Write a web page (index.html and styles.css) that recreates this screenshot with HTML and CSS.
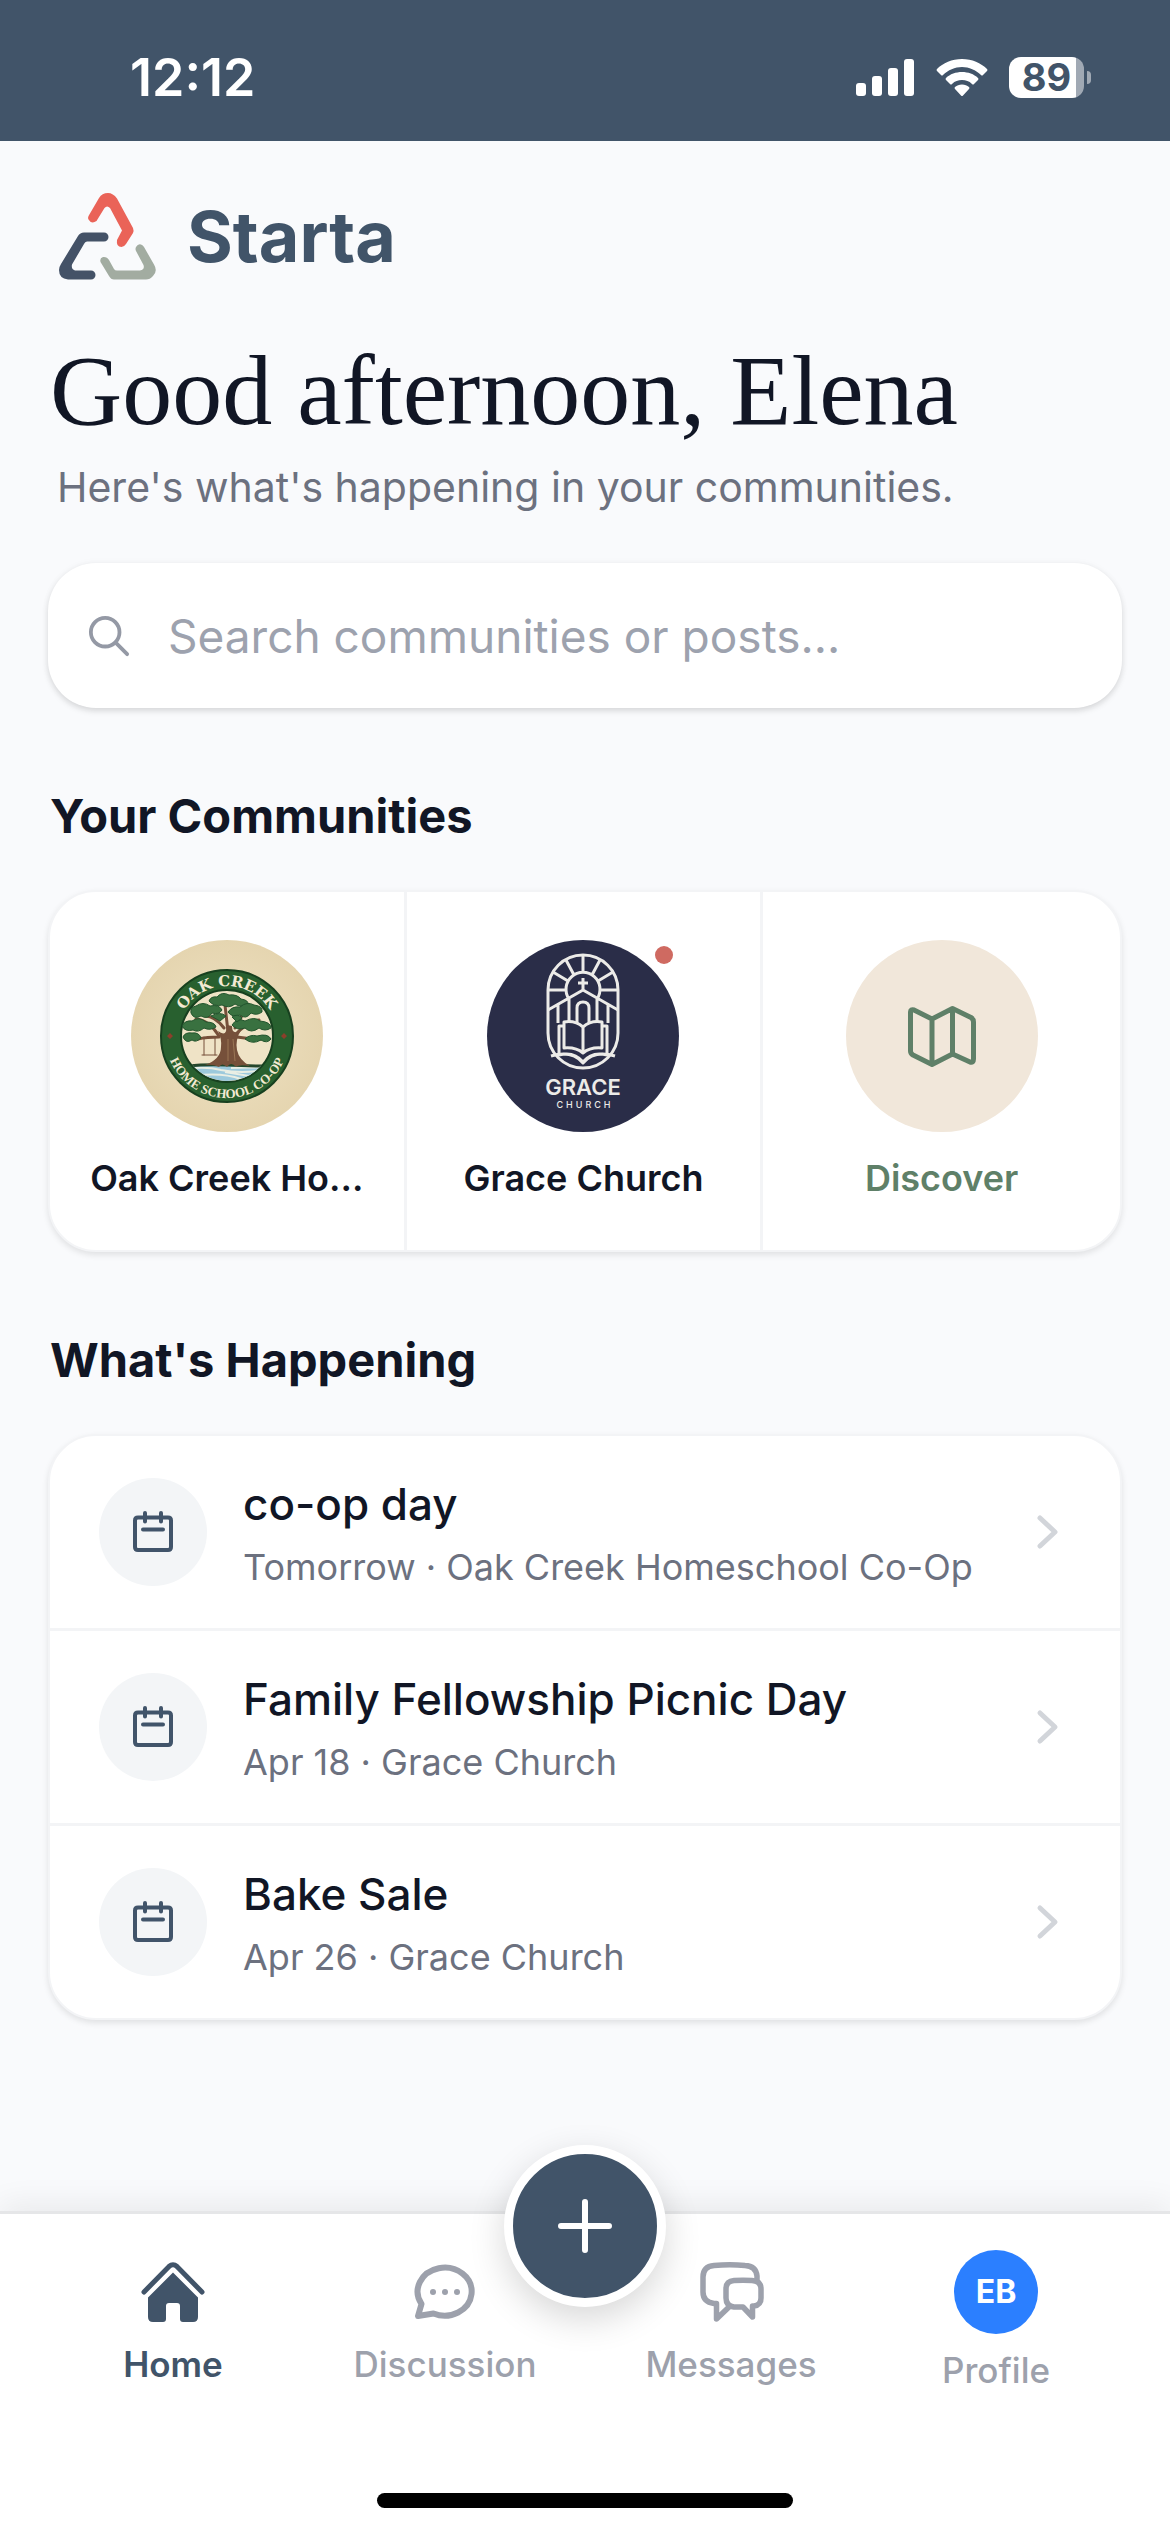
FILE: index.html
```html
<!DOCTYPE html>
<html lang="en">
<head>
<meta charset="utf-8">
<meta name="viewport" content="width=device-width, initial-scale=1">
<title>Starta</title>
<link rel="stylesheet" href="styles.css">
</head>
<body>
<div class="status-bar">
  <span class="clock">12:12</span>
  <div class="status-icons">
    <svg width="60" height="38" viewBox="0 0 60 38" fill="#fff" aria-hidden="true">
      <rect x="1" y="24" width="10" height="13" rx="3"/><rect x="17" y="17" width="10" height="20" rx="3"/><rect x="33" y="9" width="10" height="28" rx="3"/><rect x="49" y="0" width="10" height="37" rx="3"/>
    </svg>
    <svg width="52" height="38" viewBox="0 0 52 38" fill="#fff" aria-hidden="true">
      <path d="M26 0C36 0 45 4 51 10Q52 11 51 12L47 16Q46 17 45 16C40 11 33 8 26 8S12 11 7 16Q6 17 5 16L1 12Q0 11 1 10C7 4 16 0 26 0Z"/>
      <path d="M26 13C32 13 38 15 42 19Q43 20 42 21L38 25Q37 26 36 25C33 22 30 21 26 21S19 22 16 25Q15 26 14 25L10 21Q9 20 10 19C14 15 20 13 26 13Z"/>
      <path d="M26 25.500C29 25.500 31 26.500 33 28Q34 29 33 30L27 36.500Q26 37.500 25 36.500L19 30Q18 29 19 28C21 26.500 23 25.500 26 25.500Z"/>
    </svg>
    <div class="battery"><span class="battery-level">89</span></div>
  </div>
</div>

<main class="page">
  <header class="brand">
    <svg width="98" height="88" viewBox="0 0 98 88" aria-hidden="true">
      <path d="M29.500 26.500Q32.500 31.500 37.500 28L45.500 15Q48 12 51 15L63 37.500L58 47Q57 54 62.500 54Q65 54 67 51L74 40Q75 37.500 74 35L58 5.500Q54 0 49 0Q43 0 40 5L29.500 23Q28.500 25 29.500 26.500Z" fill="#ea6358"/>
      <path d="M25 39.500H45A4.500 4.500 0 0 1 45 48.500H28Q26 48.500 25 51L13 71.500Q12 76 16 77.500H32A4.500 4.500 0 0 1 32 86.500H9Q0 85.500 0 77Q0 74 2 71L19 43Q21 39.500 25 39.500Z" fill="#445267"/>
      <path d="M77 54Q79 50.500 82 51.500Q84 52 85 54L95 71.500Q99 78 94 83Q91 86.500 87 86.500H55Q52 86.500 50 83L41.500 69Q40.500 65 44 64Q48 63.500 50 67L55 76Q56 77.500 58 77.500H81Q86 76.500 84.500 72L77 58Q76 56 77 54Z" fill="#a2aca1"/>
    </svg>
    <span class="brand-name">Starta</span>
  </header>

  <h1 class="greeting">Good afternoon, Elena</h1>
  <p class="subtitle">Here's what's happening in your communities.</p>

  <form class="search" role="search">
    <svg width="42" height="42" viewBox="0 0 44 44" fill="none" stroke="#9499a5" stroke-width="4" stroke-linecap="round" aria-hidden="true"><circle cx="18" cy="18" r="15"/><path d="M29 29L41 41"/></svg>
    <input class="search-input" type="search" aria-label="Search communities or posts" placeholder="Search communities or posts...">
  </form>

  <section>
    <h2 class="section-title">Your Communities</h2>
    <div class="card communities">
      <a class="community" href="#oak-creek">
        <svg class="avatar" viewBox="0 0 192 192" aria-hidden="true">
          <defs>
            <radialGradient id="sand"><stop offset="0" stop-color="#efe2c3"/><stop offset="1" stop-color="#e5d5b0"/></radialGradient>
            <clipPath id="inner"><circle cx="96" cy="96" r="45"/></clipPath>
            <path id="arc-top" d="M46 96A50 50 0 0 1 146 96"/>
            <path id="arc-bottom" d="M34 96A62 62 0 0 0 158 96"/>
          </defs>
          <circle cx="96" cy="96" r="96" fill="url(#sand)"/>
          <circle cx="96" cy="96" r="66" fill="#28602f" stroke="#17401f" stroke-width="2"/>
          <circle cx="96" cy="96" r="46" fill="#efe3c6" stroke="#17401f" stroke-width="2"/>
          <g clip-path="url(#inner)">
            <path d="M48 126H144V145H48Z" fill="#9cc9dc"/>
            <path d="M53 129Q75 126 90 130Q110 134 135 130M62 136Q90 132 110 139M100 128L138 127L118 136L94 132" stroke="#e9eee4" stroke-width="2" fill="none"/>
            <path d="M57 126Q75 124 96 125T137 126" stroke="#24462b" stroke-width="3" fill="none"/>
          </g>
          <g fill="none" stroke="#76503a" stroke-linecap="round">
            <path d="M88 96Q78 80 65 79M104 95Q116 82 128 80M97 92L94 65M93 88Q84 76 74 76M104 88Q114 74 111 67M88 97Q76 97 67 99M106 97Q118 99 130 99" stroke-width="3"/>
            <path d="M73 97V115M84 97V115M71 115H86" stroke-width="1"/>
          </g>
          <path d="M87 91Q96 98 96 85L101 86Q101 96 110 90Q104 100 106 110Q108 120 119 126Q108 124 105 127Q100 121 96 127Q91 122 88 127Q82 124 74 125Q90 119 90 107Q91 99 87 91Z" fill="#76503a"/>
          <path d="M97 99V121M102 99L104 121" stroke="#9a7655" stroke-width="1"/>
          <g fill="#397140" stroke="#23552e" stroke-width="1">
            <path d="M78 61Q80 56 86 57Q91 51 98 55Q106 54 110 59Q118 60 117 65Q110 68 104 64Q98 69 91 65Q83 67 78 61Z"/>
            <path d="M60 73Q59 67 65 66Q72 61 79 66Q88 64 91 70Q88 75 81 73Q77 80 70 76Q63 80 60 73Z"/>
            <path d="M97 72Q101 66 109 67Q116 61 123 65Q132 66 131 72Q126 76 120 73Q115 80 109 75Q101 78 97 72Z"/>
            <path d="M51 86Q54 80 61 81Q68 76 75 82Q84 82 85 87Q79 91 73 88Q67 93 62 90Q54 92 51 86Z"/>
            <path d="M101 85Q106 77 114 81Q124 76 129 81Q140 82 140 88Q134 92 128 88Q120 94 114 88Q106 91 101 85Z"/>
            <path d="M52 97Q54 92 61 93Q68 92 70 98Q65 103 61 100Q55 104 52 97ZM114 99Q119 94 126 96Q137 93 140 99Q136 104 130 100Q121 105 114 99ZM80 76Q89 71 95 76L89 81ZM101 77Q107 73 111 78L106 82Z"/>
          </g>
          <path d="M39 93L42 96L39 99L36 96ZM153 93L156 96L153 99L150 96Z" fill="#8b3f2b"/>
          <text class="badge-text badge-top" text-anchor="middle"><textPath href="#arc-top" startOffset="50%">OAK CREEK</textPath></text>
          <text class="badge-text badge-bottom" text-anchor="middle"><textPath href="#arc-bottom" startOffset="50%">HOME SCHOOL CO-OP</textPath></text>
        </svg>
        <span class="community-name">Oak Creek Ho...</span>
      </a>
      <a class="community" href="#grace-church">
        <span class="avatar-wrap">
          <svg class="avatar" viewBox="0 0 192 192" aria-hidden="true">
            <circle cx="96" cy="96" r="96" fill="#2a2d48"/>
            <g fill="none" stroke="#ecebe8" stroke-width="3" stroke-linejoin="round">
              <path d="M61 50A35 35 0 0 1 131 50V93A35 35 0 0 1 61 93Z"/>
              <path d="M82 59A17 17 0 1 1 110 59M96 15V32M79 20L87 35M66 32L81 41M61 50H78M113 20L105 35M126 32L111 41M131 50H114"/>
              <path d="M61 70L96 50L131 70M96 38V51M91 43H101M82 58V81M110 58V81M90 84V68Q90 62 96 62T102 68V84M71 64V83M121 64V83"/>
              <path d="M96 87Q88 80 77 82V108Q89 107 96 113Q103 107 115 108V82Q104 80 96 87V113M77 86H72V115Q87 111 96 122Q105 111 120 115V86H115M64 116Q85 110 96 123Q107 110 128 116"/>
            </g>
            <text class="grace-title" x="96" y="155" text-anchor="middle">GRACE</text>
            <text class="grace-sub" x="98" y="168" text-anchor="middle">CHURCH</text>
          </svg>
          <span class="unread-dot"></span>
        </span>
        <span class="community-name">Grace Church</span>
      </a>
      <a class="community discover" href="#discover">
        <svg class="avatar" viewBox="0 0 192 192" aria-hidden="true">
          <circle cx="96" cy="96" r="96" fill="#f1e7da"/>
          <path d="M64.500 72Q64.500 69 68 70L86 79L106.500 68.500L125 77.500Q127.500 79 127.500 82V119Q127.500 123 124 122L106.500 114L86 124.500L67 115Q64.500 113.500 64.500 111ZM86 79V124M106.500 69V114" fill="none" stroke="#5f8068" stroke-width="5" stroke-linejoin="round"/>
        </svg>
        <span class="community-name">Discover</span>
      </a>
    </div>
  </section>

  <section>
    <h2 class="section-title">What's Happening</h2>
    <div class="card events">
      <a class="event" href="#coop-day">
        <span class="event-icon"><svg width="42" height="42" aria-hidden="true"><use href="#calendar"/></svg></span>
        <span class="event-text"><span class="event-title">co-op day</span><span class="event-meta">Tomorrow · Oak Creek Homeschool Co-Op</span></span>
        <svg width="24" height="36" aria-hidden="true"><use href="#chevron"/></svg>
      </a>
      <a class="event" href="#picnic">
        <span class="event-icon"><svg width="42" height="42" aria-hidden="true"><use href="#calendar"/></svg></span>
        <span class="event-text"><span class="event-title">Family Fellowship Picnic Day</span><span class="event-meta">Apr 18 · Grace Church</span></span>
        <svg width="24" height="36" aria-hidden="true"><use href="#chevron"/></svg>
      </a>
      <a class="event" href="#bake-sale">
        <span class="event-icon"><svg width="42" height="42" aria-hidden="true"><use href="#calendar"/></svg></span>
        <span class="event-text"><span class="event-title">Bake Sale</span><span class="event-meta">Apr 26 · Grace Church</span></span>
        <svg width="24" height="36" aria-hidden="true"><use href="#chevron"/></svg>
      </a>
    </div>
  </section>
</main>

<nav class="tab-bar" aria-label="Main">
  <div class="tabs">
    <a class="tab tab-active" href="#home">
      <svg class="tab-icon" viewBox="0 0 72 72" aria-hidden="true">
        <path d="M7 36L32 10.500Q36 7 40 10.500L65 36" fill="none" stroke="currentColor" stroke-width="5" stroke-linecap="round"/>
        <path d="M36 16.500L61 41.500V61Q61 66 56 66H46Q43 66 43 63V50Q43 47 40 47H32Q29 47 29 50V63Q29 66 26 66H16Q11 66 11 61V41.500Z" fill="currentColor"/>
      </svg>
      <span>Home</span>
    </a>
    <a class="tab" href="#discussion">
      <svg class="tab-icon" viewBox="0 0 72 72" fill="none" stroke="currentColor" stroke-width="6" stroke-linejoin="round" aria-hidden="true">
        <path d="M9 60L12.500 48A27 24 0 1 1 24.500 57.500Z"/><g fill="currentColor" stroke="none"><circle cx="24" cy="36" r="3"/><circle cx="36" cy="36" r="3"/><circle cx="48" cy="36" r="3"/></g>
      </svg>
      <span>Discussion</span>
    </a>
    <a class="tab" href="#messages">
      <svg class="tab-icon" viewBox="0 0 72 72" fill="none" stroke="currentColor" stroke-width="5.500" stroke-linejoin="round" aria-hidden="true">
        <path d="M62 24V20Q61 10 50 9.500Q35 8 19 9.500Q8 10.500 8 21V36Q8 46 19 47.500H21.500V63L34 51"/>
        <path d="M39 24.500Q48 24 57 24.500Q66 25 66 33V42Q66 49 59 50H57.500V61L48 51H39Q31 50 31 42V33Q31 25 39 24.500Z"/>
      </svg>
      <span>Messages</span>
    </a>
    <a class="tab" href="#profile"><span class="profile-badge">EB</span><span>Profile</span></a>
  </div>
  <button class="add-button" type="button" aria-label="Create post">
    <svg width="54" height="54" viewBox="0 0 54 54" stroke="#fff" stroke-width="6" stroke-linecap="round" aria-hidden="true"><path d="M27 3V51M3 27H51"/></svg>
  </button>
  <div class="home-indicator"></div>
</nav>

<svg class="symbols" aria-hidden="true">
  <symbol id="calendar" viewBox="0 0 42 42"><path d="M6 6.500H36Q39 6.500 39 9.500V36Q39 39 36 39H6Q3 39 3 36V9.500Q3 6.500 6 6.500ZM13 2V10.500M29 2V10.500M11 18.500H31" fill="none" stroke="#41546a" stroke-width="4" stroke-linecap="round"/></symbol>
  <symbol id="chevron" viewBox="0 0 24 36"><path d="M4 4L19 18L4 32" fill="none" stroke="#d2d5da" stroke-width="5" stroke-linecap="round" stroke-linejoin="round"/></symbol>
</svg>
</body>
</html>
```
FILE: styles.css
```css
* { box-sizing: border-box; }

body {
  margin: 0;
  min-height: 100vh;
  display: flex;
  flex-direction: column;
  background: #f9fafc;
  color: #111625;
  font-family: Inter, "Liberation Sans", sans-serif;
}

a { color: inherit; text-decoration: none; }
svg { display: block; flex: none; }
.symbols { position: absolute; width: 0; height: 0; }

.status-bar {
  display: flex;
  align-items: center;
  justify-content: space-between;
  height: 141px;
  padding: 14px 80px 0 130px;
  background: #415469;
  color: #fff;
}
.clock { font-size: 52px; font-weight: 600; line-height: 60px; }
.status-icons { display: flex; align-items: center; gap: 21px; }
.battery {
  position: relative;
  width: 75px;
  height: 41px;
  margin-right: 6px;
  border-radius: 12px;
  background: linear-gradient(to right, #fff 89%, #a0a9b4 89%);
}
.battery::after {
  content: "";
  position: absolute;
  right: -7px;
  top: 14px;
  width: 4px;
  height: 13px;
  border-radius: 0 4px 4px 0;
  background: #a0a9b4;
}
.battery-level {
  display: block;
  text-align: center;
  color: #415469;
  font-size: 38px;
  font-weight: 700;
  line-height: 41px;
}

.page { flex: 1; padding: 52px 48px 0; }

.brand { display: flex; align-items: center; gap: 30px; padding-left: 11px; }
.brand-name { color: #415469; font-size: 70px; font-weight: 700; line-height: 88px; }

.greeting {
  margin: 54px 0 0;
  padding-left: 2px;
  font-family: "Liberation Serif", serif;
  font-size: 100px;
  font-weight: 400;
  line-height: 112px;
}
.subtitle { margin: 16px 0 0; padding-left: 9px; color: #6c717f; font-size: 41px; line-height: 48px; }

.search {
  display: flex;
  align-items: center;
  gap: 38px;
  height: 145px;
  margin: 52px 0 0;
  padding: 0 40px;
  border-radius: 48px;
  background: #fff;
  box-shadow: 0 3px 6px rgba(0, 0, 0, .13), 0 0 8px rgba(0, 0, 0, .03);
}
.search-input {
  flex: 1;
  min-width: 0;
  padding: 0;
  border: 0;
  outline: 0;
  background: none;
  font: 400 46px/60px Inter, "Liberation Sans", sans-serif;
}
.search-input::placeholder { color: #9da2ae; opacity: 1; }

.section-title {
  margin: 80px 0 46px;
  padding-left: 2px;
  font-size: 47px;
  font-weight: 700;
  line-height: 56px;
}

.card {
  border: 2px solid #f3f4f6;
  border-radius: 48px;
  background: #fff;
  box-shadow: 0 3px 6px rgba(0, 0, 0, .1);
  overflow: hidden;
}
.communities { display: grid; grid-template-columns: repeat(3, minmax(0, 1fr)); }
.community {
  display: flex;
  flex-direction: column;
  align-items: center;
  gap: 22px;
  padding: 48px 36px;
  border-right: 3px solid #f3f4f6;
}
.community:last-child { border-right: 0; }
.avatar { width: 192px; height: 192px; }
.avatar-wrap { position: relative; }
.unread-dot {
  position: absolute;
  right: 6px;
  top: 6px;
  width: 18px;
  height: 18px;
  border-radius: 50%;
  background: #cf6a61;
}
.community-name {
  white-space: nowrap;
  font-size: 36px;
  font-weight: 600;
  line-height: 48px;
}
.discover { color: #5f8068; }
.badge-text { font-weight: 700; fill: #f3ead2; }
.badge-top { font-family: "DejaVu Serif", serif; font-size: 15px; }
.badge-bottom { font-family: "Liberation Serif", serif; font-size: 13px; }
.grace-title { fill: #ecebe8; font-size: 22px; font-weight: 600; }
.grace-sub { fill: #ecebe8; font-size: 9px; font-weight: 500; letter-spacing: 3px; }

.event {
  display: flex;
  align-items: center;
  gap: 36px;
  min-height: 195px;
  padding: 36px 60px 36px 49px;
  border-bottom: 3px solid #f3f4f6;
}
.event:last-child { min-height: 192px; border-bottom: 0; }
.event-icon {
  display: grid;
  place-items: center;
  flex: none;
  width: 108px;
  height: 108px;
  border-radius: 50%;
  background: #f3f5f7;
}
.event-text { flex: 1; min-width: 0; display: flex; flex-direction: column; gap: 9px; }
.event-title { font-size: 44px; font-weight: 500; line-height: 60px; }
.event-meta { color: #6c717f; font-size: 36px; line-height: 48px; }

.tab-bar {
  position: relative;
  height: 321px;
  border-top: 3px solid #e5e6e8;
  background: #fff;
  box-shadow: 0 -6px 30px rgba(0, 0, 0, .07);
}
.tabs {
  display: grid;
  grid-template-columns: 272fr 272fr 300fr 230fr;
  padding: 36px 59px 0 37px;
}
.tab {
  display: flex;
  flex-direction: column;
  align-items: center;
  gap: 12px;
  color: #9da1ac;
  font-size: 35px;
  font-weight: 500;
  line-height: 48px;
}
.tab-active { color: #415469; font-weight: 600; }
.tab-icon { width: 72px; height: 72px; margin-top: 6px; }
.profile-badge {
  display: grid;
  place-items: center;
  width: 84px;
  height: 84px;
  border-radius: 50%;
  background: #2b7fff;
  color: #fff;
  font-size: 32px;
  font-weight: 700;
}
.add-button {
  position: absolute;
  left: 50%;
  top: -69px;
  display: grid;
  place-items: center;
  width: 162px;
  height: 162px;
  margin-left: -81px;
  padding: 0;
  border: 9px solid #fff;
  border-radius: 50%;
  background: #415469;
  box-shadow: 0 12px 36px rgba(0, 0, 0, .16);
}
.home-indicator {
  position: absolute;
  left: 50%;
  bottom: 24px;
  width: 416px;
  height: 15px;
  margin-left: -208px;
  border-radius: 8px;
  background: #000;
}
```
